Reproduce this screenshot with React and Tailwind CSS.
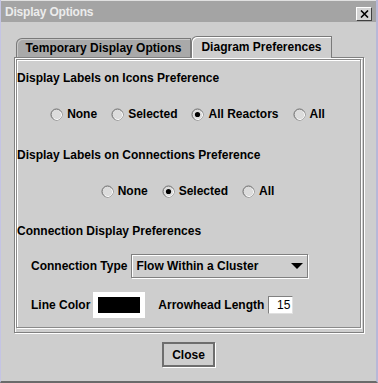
import React from "react";

function Radio({ checked, label }) {
  return (
    <div className="flex items-center gap-[4px]">
      <svg width="13" height="13" viewBox="0 0 13 13">
        <circle cx="6.5" cy="6.5" r="5.5" fill="#dcdcdc" stroke="#6a6a6a" strokeWidth="1" />
        <path d="M10.2 3.6 A4.6 4.6 0 0 1 3.6 10.2" fill="none" stroke="#ffffff" strokeWidth="1" />
        {checked && <circle cx="6.5" cy="6.5" r="2.6" fill="#000" />}
      </svg>
      <span>{label}</span>
    </div>
  );
}

export default function App() {
  return (
    <div className="w-[378px] h-[383px] bg-[#cecece] flex flex-col font-['Liberation_Sans',Arial,sans-serif] text-[12px] font-bold text-black border-l border-l-[#c4c4e4] border-r-2 border-r-[#b8b8d8] border-b-2 border-b-[#6a6a6a] overflow-hidden">
      {/* Title bar */}
      <div className="h-[22px] bg-[#a4a4a4] border-t border-t-[#e0e0e0] flex items-center justify-between pl-[4px] pr-[4px] shrink-0">
        <span className="text-[#ececec] text-[12px] leading-none mt-[1px] tracking-[-0.2px]">Display Options</span>
        <div className="w-[16px] h-[14px] bg-[#d4d4d4] border border-t-white border-l-white border-r-[#404040] border-b-[#404040] flex items-center justify-center mt-[5px]">
          <svg width="9" height="8" viewBox="0 0 9 8">
            <path d="M1 0.5 L8 7.5 M8 0.5 L1 7.5" stroke="#000" strokeWidth="1.6" />
          </svg>
        </div>
      </div>

      {/* Tabs */}
      <div className="mt-[14px] ml-[15px] flex items-end h-[21px] relative z-10">
        <div className="w-[175px] h-[19px] bg-[#a9a9a9] border border-[#7a7a7a] border-b-0 rounded-tl-[6px] shadow-[inset_1px_1px_0_#c8c8c8] flex items-center justify-center">
          <span className="text-[12px]">Temporary Display Options</span>
        </div>
        <div className="w-[141px] h-[22px] -mb-[1px] bg-[#cecece] border border-[#7a7a7a] border-b-0 rounded-tl-[6px] shadow-[inset_1px_1px_0_#ffffff] flex items-center justify-center pb-[1px]">
          <span className="text-[12px]">Diagram Preferences</span>
        </div>
      </div>

      {/* Panel */}
      <div className="ml-[13px] w-[350px] h-[276px] border border-[#808080] shadow-[inset_1px_1px_0_#ffffff,1px_1px_0_#ffffff] pt-[1px] pl-[1px] pr-[2px] pb-[4px] flex">
        <div className="flex-1 border border-[#8a8a8a] shadow-[inset_1px_1px_0_#ffffff,1px_1px_0_#ffffff] flex flex-col">
          <div className="mt-[8px] h-[20px] flex items-center">Display Labels on Icons Preference</div>
          <div className="mt-[16px] h-[20px] flex items-center justify-center gap-[14px] pr-[2px]">
            <Radio label="None" />
            <Radio label="Selected" />
            <Radio checked label="All Reactors" />
            <Radio label="All" />
          </div>
          <div className="mt-[21px] h-[20px] flex items-center">Display Labels on Connections Preference</div>
          <div className="mt-[16px] h-[20px] flex items-center justify-center gap-[14px] pr-[2px]">
            <Radio label="None" />
            <Radio checked label="Selected" />
            <Radio label="All" />
          </div>
          <div className="mt-[20px] h-[20px] flex items-center">Connection Display Preferences</div>
          <div className="mt-[13px] h-[24px] flex items-center pl-[14px] gap-[4px]">
            <span>Connection Type</span>
            <div className="w-[177px] h-[24px] border border-[#808080] shadow-[1px_1px_0_#ffffff,inset_1px_1px_0_#ffffff] flex items-center justify-between pl-[4px] pr-[4px]">
              <span>Flow Within a Cluster</span>
              <svg width="12" height="6" viewBox="0 0 12 6">
                <path d="M0 0 L12 0 L6 6 Z" fill="#000" />
              </svg>
            </div>
          </div>
          <div className="mt-[14px] h-[26px] flex items-center pl-[14px]">
            <span>Line Color</span>
            <div className="ml-[3px] w-[52px] h-[26px] bg-white p-[5px]">
              <div className="w-full h-full bg-black" />
            </div>
            <span className="ml-[13px]">Arrowhead Length</span>
            <div className="ml-[4px] w-[25px] h-[18px] bg-white border border-t-[#808080] border-l-[#808080] border-r-[#e0e0e0] border-b-[#e0e0e0] flex items-center justify-end pr-[2px] font-normal text-[12px]">
              15
            </div>
          </div>
        </div>
      </div>

      {/* Close */}
      <div className="mt-[9px] flex justify-center">
        <div className="w-[53px] h-[25px] border-2 border-[#6e6e6e] shadow-[1px_1px_0_#ffffff] flex items-center justify-center">
          <span>Close</span>
        </div>
      </div>
    </div>
  );
}
